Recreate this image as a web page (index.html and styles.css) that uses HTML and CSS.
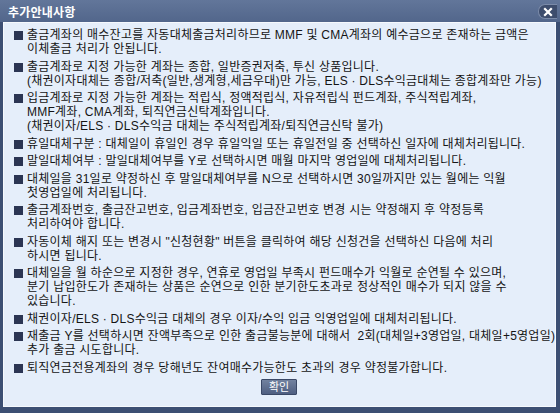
FILE: index.html
```html
<!DOCTYPE html>
<html lang="ko">
<head>
<meta charset="utf-8">
<title>추가안내사항</title>
<link rel="stylesheet" href="styles.css">
</head>
<body>
<div class="window">
  <div class="titlebar">
    <span class="title">추가안내사항</span>
    <span class="close"><svg width="10" height="10" viewBox="0 0 10 10"><path d="M2 2 L8 8 M8 2 L2 8" stroke="#fff" stroke-width="2.2" stroke-linecap="square"/></svg></span>
  </div>
  <div class="content">
    <ul class="notes">
      <li>출금계좌의 매수잔고를 자동대체출금처리하므로 MMF 및 CMA계좌의 예수금으로 존재하는 금액은<br>이체출금 처리가 안됩니다.</li>
      <li>출금계좌로 지정 가능한 계좌는 종합, 일반증권저축, 투신 상품입니다.<br>(채권이자대체는 종합/저축(일반,생계형,세금우대)만 가능, ELS · DLS수익금대체는 종합계좌만 가능)</li>
      <li>입금계좌로 지정 가능한 계좌는 적립식, 정액적립식, 자유적립식 펀드계좌, 주식적립계좌,<br>MMF계좌, CMA계좌, 퇴직연금신탁계좌입니다.<br>(채권이자/ELS · DLS수익금 대체는 주식적립계좌/퇴직연금신탁 불가)</li>
      <li>휴일대체구분 : 대체일이 휴일인 경우 휴일익일 또는 휴일전일 중 선택하신 일자에 대체처리됩니다.</li>
      <li>말일대체여부 : 말일대체여부를 Y로 선택하시면 매월 마지막 영업일에 대체처리됩니다.</li>
      <li>대체일을 31일로 약정하신 후 말일대체여부를 N으로 선택하시면 30일까지만 있는 월에는 익월<br>첫영업일에 처리됩니다.</li>
      <li>출금계좌번호, 출금잔고번호, 입금계좌번호, 입금잔고번호 변경 시는 약정해지 후 약정등록<br>처리하여야 합니다.</li>
      <li>자동이체 해지 또는 변경시 "신청현황" 버튼을 클릭하여 해당 신청건을 선택하신 다음에 처리<br>하시면 됩니다.</li>
      <li>대체일을 월 하순으로 지정한 경우, 연휴로 영업일 부족시 펀드매수가 익월로 순연될 수 있으며,<br>분기 납입한도가 존재하는 상품은 순연으로 인한 분기한도초과로 정상적인 매수가 되지 않을 수<br>있습니다.</li>
      <li>채권이자/ELS · DLS수익금 대체의 경우 이자/수익 입금 익영업일에 대체처리됩니다.</li>
      <li>재출금 Y를 선택하시면 잔액부족으로 인한 출금불능분에 대해서&nbsp; 2회(대체일+3영업일, 대체일+5영업일)<br>추가 출금 시도합니다.</li>
      <li>퇴직연금전용계좌의 경우 당해년도 잔여매수가능한도 초과의 경우 약정불가합니다.</li>
    </ul>
    <div class="actions"><button class="btn">확인</button></div>
  </div>
</div>
</body>
</html>
```
FILE: styles.css
```css
html, body {
  margin: 0;
  padding: 0;
}
body {
  width: 560px;
  height: 413px;
  overflow: hidden;
  font-family: "Liberation Sans", "Noto Sans CJK KR", sans-serif;
}
.window {
  box-sizing: border-box;
  width: 560px;
  height: 413px;
  background: #3c4f73;
  padding: 0 4px 6px 3px;
  display: flex;
  flex-direction: column;
}
.titlebar {
  height: 22px;
  flex: 0 0 22px;
  display: flex;
  align-items: center;
  justify-content: space-between;
  background: linear-gradient(#62769a, #52668b);
  margin: 0 -4px 0 -3px;
  padding: 0 3px 0 8px;
}
.title {
  color: #fff;
  font-size: 12px;
  font-weight: bold;
  letter-spacing: 0.2px;
}
.close {
  width: 18px;
  height: 13px;
  border-radius: 7px 0 0 7px;
  background: #3d4d6d;
  border: 1px solid #7a8aa8;
  border-right: none;
  display: flex;
  align-items: center;
  justify-content: center;
  margin-top: 1px;
}
.content {
  flex: 1;
  background: #e5eefa;
  border: 1px solid #f6f9fd;
  display: flex;
  flex-direction: column;
  padding: 5px 0 0 9px;
}
.notes {
  list-style: none;
  margin: 0;
  padding: 0;
  color: #141414;
  font-size: 12px;
  line-height: 14px;
  letter-spacing: 0.25px;
  white-space: nowrap;
}
.notes li {
  position: relative;
  padding-left: 14px;
  margin-bottom: 3.5px;
}
.notes li::before {
  content: "";
  position: absolute;
  left: 1px;
  top: 3px;
  width: 9px;
  height: 9px;
  background: #2b3553;
}
.actions {
  display: flex;
  justify-content: center;
  margin-top: 1px;
  padding-right: 10px;
}
.btn {
  width: 36px;
  height: 16px;
  padding: 0;
  border: 1px solid #3a4866;
  background: linear-gradient(#72829f, #4f5f81);
  color: #fff;
  font-family: "Liberation Sans", "Noto Sans CJK KR", sans-serif;
  font-size: 11px;
  line-height: 14px;
  border-radius: 1px;
}
```
